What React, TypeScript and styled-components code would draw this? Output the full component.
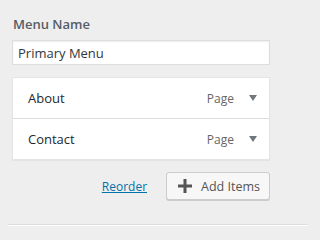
import React from "react";
import styled, { createGlobalStyle } from "styled-components";

const Global = createGlobalStyle`
  body {
    margin: 0;
    background: #eeeeee;
    font-family: "Open Sans", "Noto Sans", sans-serif;
  }
`;

const Panel = styled.div`
  padding: 14px 12px 0 12px;
  width: 258px;
`;

const Label = styled.label`
  display: block;
  font-size: 13px;
  font-weight: 600;
  line-height: 20px;
  color: #555d66;
  margin-left: 1px;
  margin-bottom: 6px;
`;

const Input = styled.input`
  box-sizing: border-box;
  display: block;
  width: 100%;
  height: 25px;
  padding: 0 5px;
  border: 1px solid #ddd;
  box-shadow: inset 0 1px 2px rgba(0, 0, 0, 0.07);
  background: #fff;
  font-family: inherit;
  font-size: 13px;
  color: #32373c;
  outline: none;
`;

const ItemList = styled.ul`
  list-style: none;
  margin: 12px 0 0 0;
  padding: 0;
  background: #fff;
  border: 1px solid #e2e4e7;
  box-shadow: 0 1px 1px rgba(0, 0, 0, 0.04);
`;

const Item = styled.li<{ $last?: boolean }>`
  display: flex;
  align-items: center;
  height: 40px;
  padding: 0 12px 0 15px;
  border-bottom: ${(p) => (p.$last ? "none" : "1px solid #dcdcde")};
`;

const Title = styled.span`
  flex: 1;
  font-size: 13px;
  font-weight: 400;
  color: #23282d;
`;

const Type = styled.span`
  font-size: 12px;
  color: #666;
  margin-right: 15px;
`;

const Arrow = styled.span`
  width: 0;
  height: 0;
  border-left: 4px solid transparent;
  border-right: 4px solid transparent;
  border-top: 6px solid #72777c;
`;

const Actions = styled.div`
  display: flex;
  justify-content: flex-end;
  align-items: center;
  margin-top: 12px;
  gap: 19px;
`;

const Link = styled.a`
  font-size: 12px;
  color: #0073aa;
  text-decoration: underline;
  cursor: pointer;
`;

const Button = styled.button`
  display: flex;
  align-items: center;
  gap: 9px;
  box-sizing: border-box;
  height: 28px;
  padding: 0 9px 0 11px;
  background: #f7f7f7;
  border: 1px solid #ccc;
  border-radius: 3px;
  box-shadow: 0 1px 0 #ccc;
  font-family: inherit;
  font-size: 12.5px;
  color: #555;
`;

const Divider = styled.hr`
  margin: 24px 12px 0 8px;
  border: 0;
  border-top: 1px solid #ddd;
  border-bottom: 1px solid #fff;
`;

const Plus = () => (
  <svg width="14" height="14" viewBox="0 0 14 14">
    <rect x="5.5" y="0" width="3" height="14" fill="#555" />
    <rect x="0" y="5.5" width="14" height="3" fill="#555" />
  </svg>
);

const items = ["About", "Contact"];

export default function App() {
  return (
    <>
      <Global />
      <Panel>
        <Label>Menu Name</Label>
        <Input defaultValue="Primary Menu" />
        <ItemList>
          {items.map((name, i) => (
            <Item key={name} $last={i === items.length - 1}>
              <Title>{name}</Title>
              <Type>Page</Type>
              <Arrow />
            </Item>
          ))}
        </ItemList>
        <Actions>
          <Link>Reorder</Link>
          <Button>
            <Plus />
            Add Items
          </Button>
        </Actions>
      </Panel>
      <Divider />
    </>
  );
}
